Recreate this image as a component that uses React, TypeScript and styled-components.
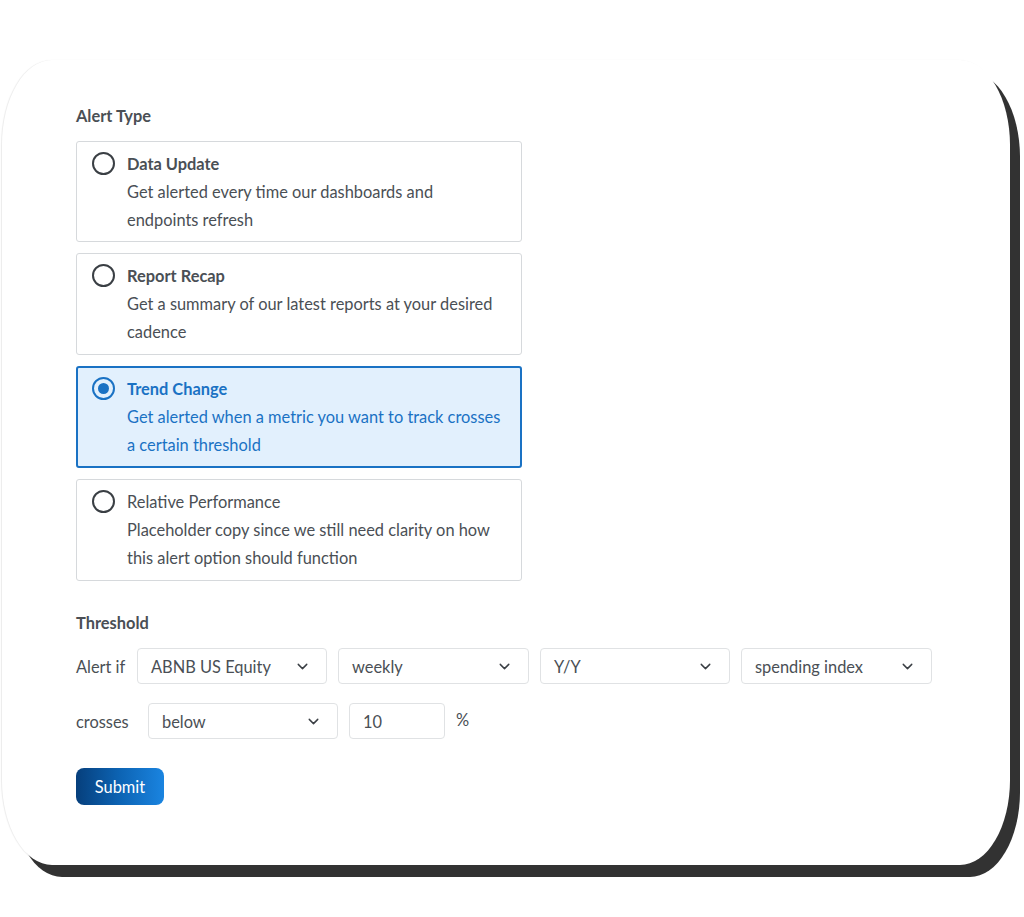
import React, { useState } from "react";
import styled, { createGlobalStyle } from "styled-components";
import { ChevronDown } from "lucide-react";

const Global = createGlobalStyle`
  html, body { margin: 0; padding: 0; background: #ffffff; }
  body { font-family: Lato, "Open Sans", Arial, sans-serif; color: #4a4f55; }
  * { box-sizing: border-box; }
`;

const Page = styled.div`
  width: 1024px;
  height: 917px;
  padding: 60px 0 0 2px;
`;

const Card = styled.div`
  width: 1008px;
  height: 805px;
  background: #fff;
  border-radius: 50px / 85px;
  box-shadow: 10px 12px 0 #323232, -1px 0 1px rgba(0, 0, 0, 0.08);
  padding: 46px 0 0 74px;
  display: flex;
  flex-direction: column;
`;

const SectionLabel = styled.div`
  font-size: 16.4px;
  font-weight: 700;
  line-height: 20px;
  color: #4a4f55;
`;

const OptionList = styled.div`
  display: flex;
  flex-direction: column;
  gap: 11px;
  margin-top: 15px;
  width: 446px;
`;

const Option = styled.label<{ $active: boolean }>`
  display: flex;
  gap: 12px;
  align-items: flex-start;
  min-height: 102px;
  padding: ${(p) => (p.$active ? "7px 14px 7px 14px" : "8px 15px 8px 15px")};
  border: ${(p) => (p.$active ? "2px solid #1a72c4" : "1px solid #d6d9dc")};
  background: ${(p) => (p.$active ? "#e2f0fd" : "#fff")};
  border-radius: 3px;
  color: ${(p) => (p.$active ? "#1a72c4" : "#4a4f55")};
  cursor: pointer;
  &:first-child {
    min-height: 101px;
    padding-bottom: 7px;
  }
`;

const Radio = styled.span<{ $active: boolean }>`
  flex: none;
  width: 23px;
  height: 23px;
  margin-top: 2px;
  border-radius: 50%;
  border: 2px solid ${(p) => (p.$active ? "#1a72c4" : "#3a3f44")};
  display: flex;
  align-items: center;
  justify-content: center;
  &::after {
    content: "";
    display: ${(p) => (p.$active ? "block" : "none")};
    width: 11px;
    height: 11px;
    border-radius: 50%;
    background: #1a72c4;
  }
`;

const OptionText = styled.div`
  display: flex;
  flex-direction: column;
  font-size: 16.4px;
  line-height: 28px;
`;

const OptionTitle = styled.div<{ $bold: boolean }>`
  font-weight: ${(p) => (p.$bold ? 700 : 400)};
`;

const ThresholdLabel = styled(SectionLabel)`
  margin-top: 32px;
`;

const Row = styled.div<{ $top: number }>`
  display: flex;
  align-items: center;
  gap: 11px;
  margin-top: ${(p) => p.$top}px;
  font-size: 16.4px;
`;

const RowLabel = styled.span<{ $w: number }>`
  flex: none;
  width: ${(p) => p.$w}px;
  color: #4a4f55;
  white-space: nowrap;
`;

const SelectBox = styled.button<{ $w: number }>`
  flex: none;
  width: ${(p) => p.$w}px;
  height: 36px;
  display: flex;
  align-items: center;
  justify-content: space-between;
  padding: 0 15px 0 13px;
  border: 1px solid #e0e2e4;
  border-radius: 4px;
  background: #fff;
  font-family: inherit;
  font-size: 16.4px;
  color: #4a4f55;
  cursor: pointer;
`;

const NumInput = styled.input`
  flex: none;
  width: 96px;
  height: 36px;
  padding: 0 13px;
  border: 1px solid #e0e2e4;
  border-radius: 4px;
  font-family: inherit;
  font-size: 16.4px;
  color: #4a4f55;
  outline: none;
`;

const Percent = styled.span`
  margin-top: -4px;
  color: #4a4f55;
`;

const Submit = styled.button`
  margin-top: 29px;
  width: 88px;
  height: 37px;
  border: none;
  border-radius: 8px;
  background: linear-gradient(90deg, #063f7c 0%, #0d64b4 50%, #1a84e0 100%);
  color: #fff;
  font-family: inherit;
  font-size: 16.4px;
  cursor: pointer;
`;

const options = [
  { title: "Data Update", desc: ["Get alerted every time our dashboards and", "endpoints refresh"], bold: true },
  { title: "Report Recap", desc: ["Get a summary of our latest reports at your desired", "cadence"], bold: true },
  { title: "Trend Change", desc: ["Get alerted when a metric you want to track crosses", "a certain threshold"], bold: true },
  { title: "Relative Performance", desc: ["Placeholder copy since we still need clarity on how", "this alert option should function"], bold: false },
];

function Select({ value, width }: { value: string; width: number }) {
  return (
    <SelectBox $w={width} type="button">
      <span>{value}</span>
      <ChevronDown size={17} strokeWidth={2} color="#3a3f44" />
    </SelectBox>
  );
}

export default function App() {
  const [sel, setSel] = useState(2);
  return (
    <>
      <Global />
      <Page>
        <Card>
          <SectionLabel>Alert Type</SectionLabel>
          <OptionList>
            {options.map((o, i) => (
              <Option key={o.title} $active={sel === i} onClick={() => setSel(i)}>
                <Radio $active={sel === i} />
                <OptionText>
                  <OptionTitle $bold={o.bold}>{o.title}</OptionTitle>
                  {o.desc.map((d) => (
                    <div key={d}>{d}</div>
                  ))}
                </OptionText>
              </Option>
            ))}
          </OptionList>
          <ThresholdLabel>Threshold</ThresholdLabel>
          <Row $top={15}>
            <RowLabel $w={50}>Alert if</RowLabel>
            <Select value="ABNB US Equity" width={190} />
            <Select value="weekly" width={191} />
            <Select value="Y/Y" width={190} />
            <Select value="spending index" width={191} />
          </Row>
          <Row $top={19}>
            <RowLabel $w={61}>crosses</RowLabel>
            <Select value="below" width={190} />
            <NumInput defaultValue="10" />
            <Percent>%</Percent>
          </Row>
          <div>
            <Submit type="button">Submit</Submit>
          </div>
        </Card>
      </Page>
    </>
  );
}
